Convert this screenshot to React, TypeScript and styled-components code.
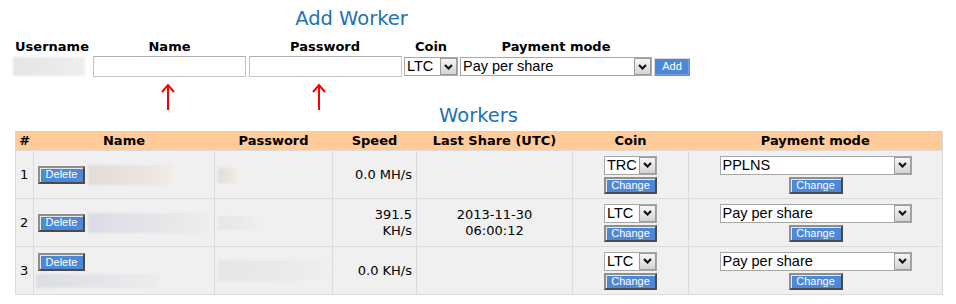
import { FC } from 'react';
import styled, { createGlobalStyle } from 'styled-components';

const GlobalStyle = createGlobalStyle`
  html, body {
    margin: 0;
    padding: 0;
    background: #fff;
  }
  body {
    font-family: "DejaVu Sans", Verdana, sans-serif;
    font-size: 13px;
    color: #000;
  }
`;

type Tone = 'beige' | 'grey' | 'cool';

interface Worker {
  id: number;
  nameW: number;
  nameTone: Tone;
  nameWraps?: boolean;
  passW: number;
  passH: number;
  passTone: Tone;
  speed: string;
  lastShare?: [string, string];
  coin: string;
  mode: string;
}

const workers: Worker[] = [
  { id: 1, nameW: 84, nameTone: 'beige', passW: 18, passH: 15, passTone: 'beige', speed: '0.0 MH/s', coin: 'TRC', mode: 'PPLNS' },
  { id: 2, nameW: 121, nameTone: 'cool', passW: 41, passH: 14, passTone: 'grey', speed: '391.5 KH/s', lastShare: ['2013-11-30', '06:00:12'], coin: 'LTC', mode: 'Pay per share' },
  { id: 3, nameW: 123, nameTone: 'cool', nameWraps: true, passW: 110, passH: 21, passTone: 'grey', speed: '0.0 KH/s', coin: 'LTC', mode: 'Pay per share' },
];

const Chevron: FC = () => (
  <svg width="9" height="6" viewBox="0 0 9 6">
    <polyline points="1,1 4.5,4.5 8,1" fill="none" stroke="#111" strokeWidth="2.2" />
  </svg>
);

const UpArrow: FC = () => (
  <svg width="14" height="27" viewBox="0 0 14 27">
    <path d="M7 27 V2 M1 9 L7 2 L13 9" fill="none" stroke="#f00" strokeWidth="2" />
  </svg>
);

const FakeSelect: FC<{ value: string; width: number }> = ({ value, width }) => (
  <SelectBox $w={width}>
    <SelectText>{value}</SelectText>
    <SelectArrow>
      <Chevron />
    </SelectArrow>
  </SelectBox>
);

const App: FC = () => (
  <>
    <GlobalStyle />
    <Page>
      <AddSection>
        <Heading>Add Worker</Heading>
        <Form>
          <FormLabel>Username</FormLabel>
          <FormLabel>Name</FormLabel>
          <FormLabel>Password</FormLabel>
          <FormLabel>Coin</FormLabel>
          <FormLabel>Payment mode</FormLabel>
          <span />

          <FormCell $align="start">
            <Redacted $w={72} $h={19} $tone="grey" />
          </FormCell>
          <FormCell>
            <TextInput type="text" />
          </FormCell>
          <FormCell>
            <TextInput type="password" />
          </FormCell>
          <FormCell>
            <FakeSelect value="LTC" width={54} />
          </FormCell>
          <FormCell>
            <FakeSelect value="Pay per share" width={192} />
          </FormCell>
          <FormCell>
            <Button $w={36} $h={18} $soft>Add</Button>
          </FormCell>

          <span />
          <ArrowCell $shift={4}>
            <UpArrow />
          </ArrowCell>
          <ArrowCell $shift={13}>
            <UpArrow />
          </ArrowCell>
        </Form>
      </AddSection>

      <Heading $gap={-2}>Workers</Heading>

      <Table>
        <colgroup>
          <col style={{ width: 18 }} />
          <col style={{ width: 181 }} />
          <col style={{ width: 118 }} />
          <col style={{ width: 84 }} />
          <col style={{ width: 156 }} />
          <col style={{ width: 116 }} />
          <col style={{ width: 254 }} />
        </colgroup>
        <thead>
          <tr>
            <Th>#</Th>
            <Th>Name</Th>
            <Th>Password</Th>
            <Th>Speed</Th>
            <Th>Last Share (UTC)</Th>
            <Th>Coin</Th>
            <Th>Payment mode</Th>
          </tr>
        </thead>
        <tbody>
          {workers.map((w) => (
            <tr key={w.id}>
              <Td $pad="0 0 0 4px">{w.id}</Td>
              <Td $pad="0 2px 0 3px">
                <Button $w={47} $h={18} $gapLeft={1}>Delete</Button>
                <Redacted
                  $w={w.nameW}
                  $h={w.nameWraps ? 14 : 20}
                  $tone={w.nameTone}
                  $block={w.nameWraps}
                  $left={w.nameWraps ? -1 : 3}
                />
              </Td>
              <Td $pad="0 2px 0 3px">
                <Redacted $w={w.passW} $h={w.passH} $tone={w.passTone} />
              </Td>
              <Td $align="right" $pad="0 4px 0 10px">{w.speed}</Td>
              <Td $align="center">
                {w.lastShare && (
                  <Stamp>
                    <span>{w.lastShare[0]}</span>
                    <span>{w.lastShare[1]}</span>
                  </Stamp>
                )}
              </Td>
              <Td $align="center">
                <Stack>
                  <FakeSelect value={w.coin} width={53} />
                  <Button $w={53} $h={17}>Change</Button>
                </Stack>
              </Td>
              <Td $align="center">
                <Stack>
                  <FakeSelect value={w.mode} width={192} />
                  <Button $w={54} $h={17}>Change</Button>
                </Stack>
              </Td>
            </tr>
          ))}
        </tbody>
      </Table>
    </Page>
  </>
);

const Page = styled.div`
  width: 956px;
  box-sizing: border-box;
  padding: 11px 12px 0 13px;
`;

const AddSection = styled.div`
  width: fit-content;
  display: flex;
  flex-direction: column;
`;

const Heading = styled.h2<{ $gap?: number }>`
  margin: ${({ $gap }) => $gap ?? 0}px 0 0;
  font-family: "DejaVu Sans", Verdana, sans-serif;
  font-weight: normal;
  font-size: 19.5px;
  line-height: 16px;
  color: #2271b3;
  text-align: center;
`;

const Form = styled.div`
  margin-top: 12px;
  display: grid;
  grid-template-columns: 78px 153px 154px 54px 192px 36px;
  column-gap: 2px;
  row-gap: 1px;
`;

const FormLabel = styled.div`
  font-weight: bold;
  font-size: 13px;
  line-height: 16px;
  text-align: center;
`;

const FormCell = styled.div<{ $align?: string }>`
  display: flex;
  align-items: center;
  justify-content: ${({ $align }) => $align ?? 'center'};
  height: 21px;
`;

const ArrowCell = styled.div<{ $shift: number }>`
  display: flex;
  justify-content: center;
  padding: 5px ${({ $shift }) => $shift}px 0 0;
  height: 27px;
`;

const TextInput = styled.input`
  box-sizing: border-box;
  width: 153px;
  height: 21px;
  margin: 0;
  padding: 1px 2px;
  border: 1px solid #c4c4c4;
  border-top-color: #b0b0b0;
  background: #fff;
  font: 13px "Liberation Sans", Arial, sans-serif;
`;

const SelectBox = styled.div<{ $w: number }>`
  display: inline-flex;
  box-sizing: border-box;
  width: ${({ $w }) => $w}px;
  height: 19px;
  border: 1px solid #a7a7a7;
  background: #fff;
  font-family: "Liberation Sans", Arial, sans-serif;
  font-size: 14.5px;
  text-align: left;
  color: #000;
`;

const SelectText = styled.span`
  flex: 1;
  padding-left: 2px;
  line-height: 17px;
  overflow: hidden;
  white-space: nowrap;
`;

const SelectArrow = styled.span`
  width: 17px;
  box-sizing: border-box;
  border: 1px solid #9c9c9c;
  background: linear-gradient(#f6f6f6, #d4d4d4);
  display: flex;
  align-items: center;
  justify-content: center;
`;

const Button = styled.button<{ $w: number; $h: number; $soft?: boolean; $gapLeft?: number }>`
  box-sizing: border-box;
  width: ${({ $w }) => $w}px;
  height: ${({ $h }) => $h}px;
  margin: 0 0 0 ${({ $gapLeft }) => $gapLeft ?? 0}px;
  padding: 0;
  vertical-align: middle;
  background: #4d88d8;
  color: #fff;
  font: 11px "Liberation Sans", Arial, sans-serif;
  line-height: 1;
  cursor: pointer;
  border: ${({ $soft }) => ($soft ? '1px' : '2px')} solid;
  border-color: ${({ $soft }) =>
    $soft ? '#d8d8d8 #8c8c8c #8c8c8c #d8d8d8' : '#8e8e8e #4a4a4a #4a4a4a #8e8e8e'};
  box-shadow: ${({ $soft }) =>
    $soft ? 'inset -1px -1px 0 #6f9fe0' : 'inset 1px 1px 0 #e8e8e8'};
`;

const toneGradient: Record<Tone, string> = {
  beige: 'linear-gradient(90deg, #e1dcd8, #e9e4df 55%, #f1ebe4)',
  grey: 'linear-gradient(90deg, #e6e6e6, #eaeaea 60%, #efefef)',
  cool: 'linear-gradient(90deg, #dadde3, #e4e5e9 50%, #ededed)',
};

const Redacted = styled.span<{
  $w: number;
  $h: number;
  $tone: Tone;
  $left?: number;
  $block?: boolean;
}>`
  display: ${({ $block }) => ($block ? 'block' : 'inline-block')};
  vertical-align: middle;
  width: ${({ $w }) => $w}px;
  height: ${({ $h }) => $h}px;
  margin: ${({ $block }) => ($block ? 3 : 0)}px 0 0 ${({ $left }) => $left ?? 0}px;
  background: ${({ $tone }) => toneGradient[$tone]};
  filter: blur(0.8px);
`;

const Table = styled.table`
  width: 927px;
  margin: 7px 0 0 2px;
  border-collapse: collapse;
  table-layout: fixed;
  background: #f0f0f0;
  border: 1px solid #d8d8d8;
`;

const Th = styled.th`
  background: #ffcc99;
  font-weight: bold;
  font-size: 13px;
  line-height: 16px;
  padding: 1px 0;
  border-top: 1px solid #d2d2d2;
  border-bottom: 1px solid #dcdcdc;
  text-align: center;
  white-space: nowrap;
`;

const Td = styled.td<{ $align?: string; $pad?: string }>`
  height: 48px;
  box-sizing: border-box;
  padding: ${({ $pad }) => $pad ?? '0 4px'};
  border: 1px solid #dcdcdc;
  text-align: ${({ $align }) => $align ?? 'left'};
  vertical-align: middle;
  font-size: 13px;
  line-height: 16px;
`;

const Stamp = styled.div`
  display: flex;
  flex-direction: column;
  align-items: center;
`;

const Stack = styled.div`
  display: inline-flex;
  flex-direction: column;
  align-items: center;
  gap: 2px;
`;

export default App;
